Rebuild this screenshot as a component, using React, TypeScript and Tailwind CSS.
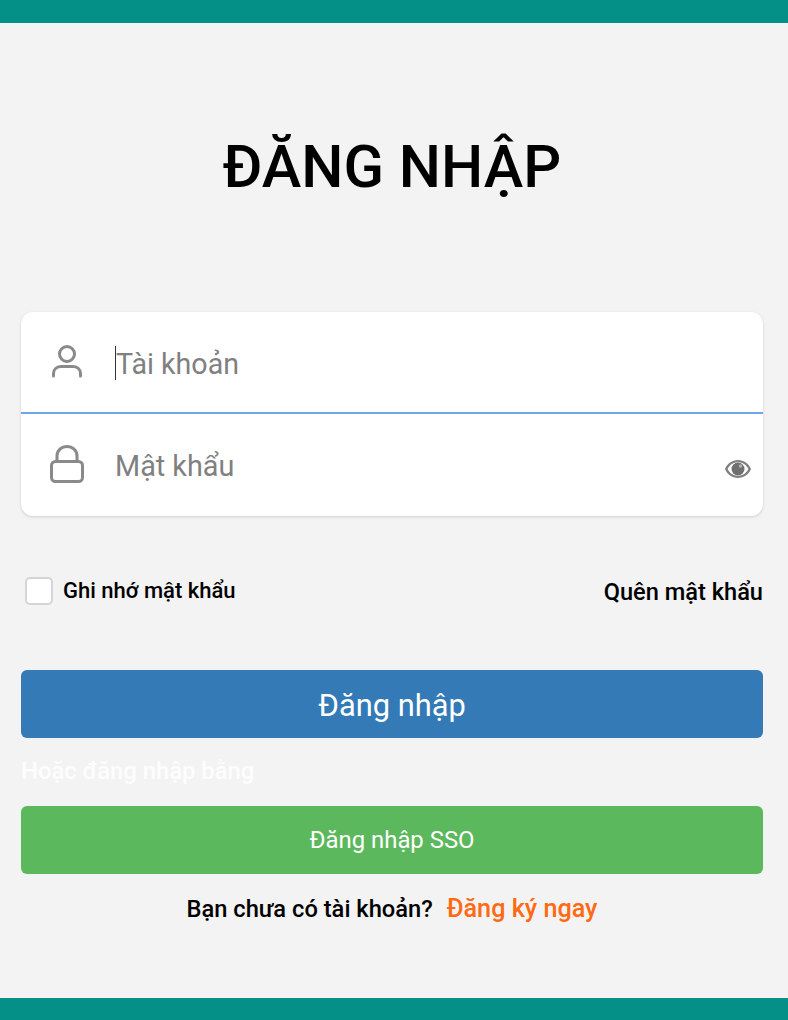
function UserIcon() {
  return (
    <svg width="30" height="33" viewBox="0 0 30 33" fill="none" stroke="#8a8a8a" strokeWidth="3" strokeLinecap="round">
      <circle cx="15" cy="9" r="7.500" />
      <path d="M1.500 31v-2.500c0-4.500 3.500-7 8-7h11c4.500 0 8 2.500 8 7V31" />
    </svg>
  );
}

function LockIcon() {
  return (
    <svg width="34" height="38" viewBox="0 0 34 38" fill="none" stroke="#8a8a8a" strokeWidth="3" strokeLinejoin="round">
      <rect x="1.500" y="16.500" width="31" height="20" rx="4" />
      <path d="M7 16v-5c0-5.500 4.500-9.500 10-9.500s10 4 10 9.500v5" />
    </svg>
  );
}

function EyeIcon() {
  return (
    <svg width="28" height="20" viewBox="0 0 28 20">
      <path
        d="M14 1C8 1 3.300 4.500 1 10c2.300 5.500 7 9 13 9s10.700-3.500 13-9C24.700 4.500 20 1 14 1zm0 15.800c-4.600 0-8.400-2.600-10.400-6.800C5.600 5.800 9.400 3.200 14 3.200s8.400 2.600 10.400 6.800c-2 4.200-5.800 6.800-10.400 6.800z"
        fill="#808080"
      />
      <circle cx="14" cy="10" r="6.500" fill="#6f6f6f" />
      <circle cx="16.500" cy="7" r="1.700" fill="#b5b5b5" />
    </svg>
  );
}

export default function App() {
  return (
    <div className="flex h-[1020px] w-[788px] flex-col overflow-hidden bg-[#f3f3f3] font-['Roboto',sans-serif]">
      <div className="h-[23px] shrink-0 bg-[#059087]" />

      <main className="flex flex-1 flex-col pr-[25px] pl-[21px]">
        <h1 className="mt-[107px] h-[74px] text-center text-[59.500px] leading-[74px] font-medium text-black">ĐĂNG NHẬP</h1>

        <div className="mt-[108px] rounded-[12px] bg-white shadow-[0_1px_3px_rgba(0,0,0,0.15)]">
          <div className="flex h-[102px] items-center border-b-2 border-[#6fa6ec]">
            <div className="mr-[2px] flex w-[92px] shrink-0 justify-center pb-[2px]">
              <UserIcon />
            </div>
            <div className="mt-[1px] h-[34px] w-[1px] bg-[#333]" />
            <span className="pt-[4px] text-[28.600px] text-[#808080]">Tài khoản</span>
          </div>
          <div className="flex h-[102px] items-center">
            <div className="flex w-[92px] shrink-0 justify-center pb-[2px]">
              <LockIcon />
            </div>
            <span className="ml-[2px] flex-1 pt-[4px] text-[28.800px] text-[#808080]">Mật khẩu</span>
            <div className="mt-[8px] mr-[11px]">
              <EyeIcon />
            </div>
          </div>
        </div>

        <div className="mt-[58px] flex h-[34px] items-center justify-between">
          <label className="flex items-center gap-[10px] pl-[4px]">
            <span className="h-[28px] w-[28px] rounded-[5px] border-2 border-[#d5d5d5] bg-white" />
            <span className="pb-[2px] text-[22px] font-medium text-black">Ghi nhớ mật khẩu</span>
          </label>
          <a className="pt-[4px] text-[23.600px] font-medium text-black">Quên mật khẩu</a>
        </div>

        <button className="mt-[62px] h-[68px] rounded-[6px] bg-[#337ab7] pt-[4px] text-[30.800px] text-white">Đăng nhập</button>
        <p className="mt-[18px] h-[30px] text-[23.800px] leading-[30px] font-medium text-white/80">Hoặc đăng nhập bằng</p>
        <button className="mt-[20px] h-[68px] rounded-[6px] bg-[#5cb85c] pt-[2px] text-[23.900px] text-white">Đăng nhập SSO</button>

        <p className="mt-[16px] text-center text-[23.700px] font-medium text-black">
          Bạn chưa có tài khoản?
          <a className="ml-[14px] text-[25.200px] text-[#ff6a13]">Đăng ký ngay</a>
        </p>
      </main>

      <div className="h-[22px] shrink-0 bg-[#059087]" />
    </div>
  );
}
